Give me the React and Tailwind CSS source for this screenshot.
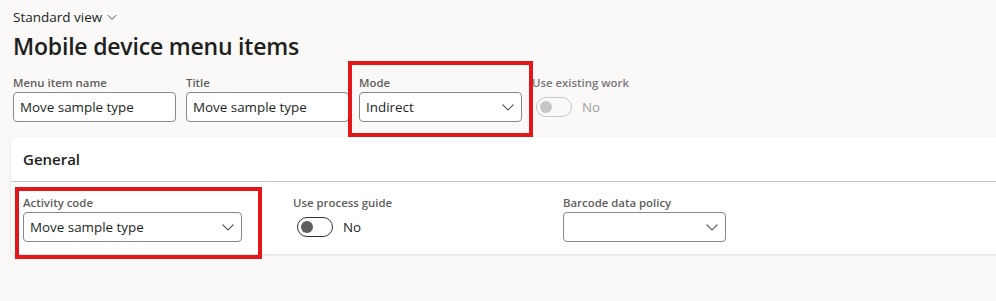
import React from 'react';

const font = { fontFamily: '"Open Sans", "Noto Sans", sans-serif' };

const Chevron = ({ className = '' }) => (
  <svg viewBox="0 0 16 16" className={className} fill="none" stroke="currentColor" strokeWidth="1.1">
    <path d="M2.5 5.5 L8 11 L13.5 5.5" />
  </svg>
);

const Label = ({ children, className = '' }) => (
  <div className={`text-[11.4px] leading-[16px] font-semibold text-[#605e5c] whitespace-nowrap ${className}`}>{children}</div>
);

const TextBox = ({ value, width = 'w-[163px]' }) => (
  <div className={`${width} h-[30px] mt-[1px] rounded-[4px] border border-[#8a8886] bg-white flex items-center px-[6px] text-[13.4px] text-[#201f1e]`}>
    {value}
  </div>
);

const Select = ({ value, width = 'w-[163px]' }) => (
  <div className={`${width} h-[30px] mt-[1px] rounded-[4px] border border-[#8a8886] bg-white flex items-center justify-between pl-[6px] pr-[5px] text-[13.4px] text-[#201f1e]`}>
    <span>{value}</span>
    <Chevron className="w-[16px] h-[16px] text-[#605e5c]" />
  </div>
);

const Toggle = ({ disabled }) => (
  <div className="flex items-center gap-[10px] h-[30px] mt-[1px] ml-[4px]">
    <div
      className={`w-[36px] h-[20px] rounded-full border flex items-center px-[3px] ${
        disabled ? 'border-[#c8c6c4]' : 'border-[#323130]'
      }`}
    >
      <div className={`w-[12px] h-[12px] rounded-full ${disabled ? 'bg-[#c8c6c4]' : 'bg-[#605e5c]'}`} />
    </div>
    <span className={`text-[13.4px] ${disabled ? 'text-[#a19f9d]' : 'text-[#201f1e]'}`}>No</span>
  </div>
);

const Highlight = ({ className }) => (
  <span className={`absolute border-[4px] border-[#e3161c] pointer-events-none ${className}`} />
);

export default function App() {
  return (
    <div className="w-[996px] h-[301px] bg-[#faf9f8] overflow-hidden" style={font}>
      <div className="pl-[13px] pt-[7px]">
        <div className="flex items-center gap-[4px] text-[13.5px] leading-[20px] text-[#201f1e]">
          Standard view
          <Chevron className="w-[12px] h-[12px] text-[#323130]" />
        </div>
        <h1 className="mt-[4px] text-[23px] leading-[30px] font-semibold text-[#201f1e] tracking-[-0.2px]">
          Mobile device menu items
        </h1>
        <div className="mt-[14px] flex gap-[10px]">
          <div>
            <Label>Menu item name</Label>
            <TextBox value="Move sample type" />
          </div>
          <div>
            <Label>Title</Label>
            <TextBox value="Move sample type" />
          </div>
          <div className="relative">
            <Label>Mode</Label>
            <Select value="Indirect" />
            <Highlight className="-left-[11px] -right-[11px] -top-[14px] -bottom-[15px]" />
          </div>
          <div className="w-[163px]">
            <Label className="text-[#797775]">Use existing work</Label>
            <Toggle disabled />
          </div>
        </div>
      </div>

      <div className="mt-[15px] ml-[11px] bg-white rounded-l-[6px] shadow-[0_1px_3px_rgba(0,0,0,0.13)] h-[117px]">
        <div className="h-[45px] flex items-center pl-[12px] text-[15px] font-semibold text-[#201f1e] border-b border-[#c8c6c4]">
          General
        </div>
        <div className="pl-[12px] pt-[13px] grid grid-cols-[270px_270px_270px]">
          <div className="relative w-[219px]">
            <Label>Activity code</Label>
            <Select value="Move sample type" width="w-[219px]" />
            <Highlight className="-left-[8px] -right-[20px] -top-[8px] -bottom-[17px]" />
          </div>
          <div>
            <Label>Use process guide</Label>
            <Toggle />
          </div>
          <div>
            <Label>Barcode data policy</Label>
            <Select value="" />
          </div>
        </div>
      </div>
    </div>
  );
}
